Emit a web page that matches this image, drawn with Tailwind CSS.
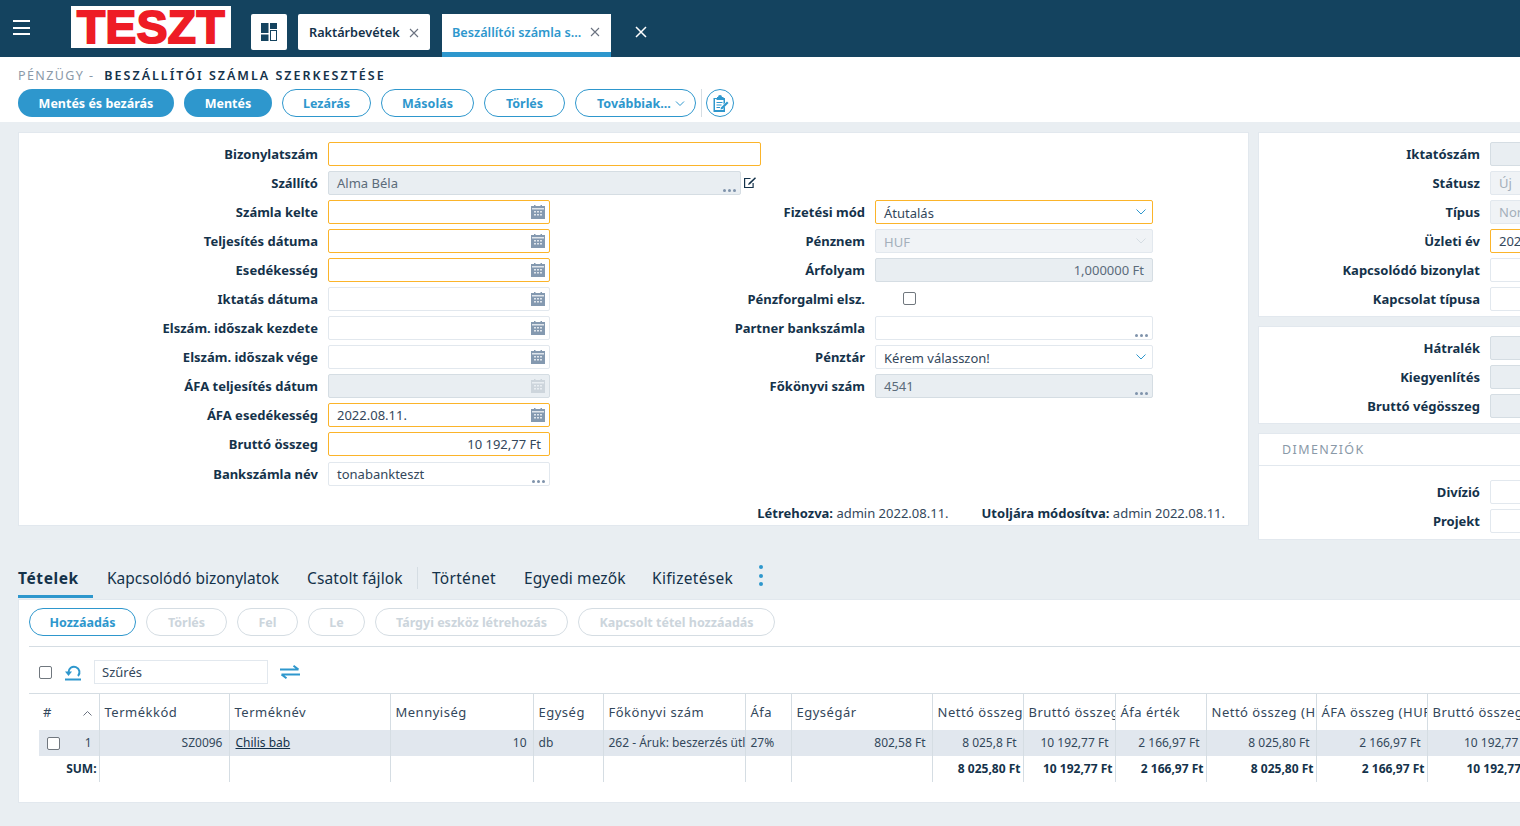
<!DOCTYPE html>
<html lang="hu">
<head>
<meta charset="utf-8" />
<title>Beszállítói számla szerkesztése</title>
<script src="https://cdn.jsdelivr.net/npm/@tailwindcss/browser@4"></script>
</head>
<body class="h-[826px] w-[1520px] overflow-hidden bg-[#e9eef2] font-['Noto_Sans',sans-serif] text-[13px] text-[#14324a]">

<!-- Top bar -->
<header class="flex h-[57px] items-start bg-[#14435f]">
  <button class="ml-[13px] mt-[20px] flex h-[15px] w-[17px] flex-col justify-between">
    <span class="h-[2px] w-full bg-white"></span><span class="h-[2px] w-full bg-white"></span><span class="h-[2px] w-full bg-white"></span>
  </button>
  <div class="ml-[41px] mt-[6px] flex h-[42px] w-[160px] items-center justify-center bg-white font-['Liberation_Sans',sans-serif] text-[46px] leading-none font-bold tracking-[0.5px] text-[#ee1c25] [-webkit-text-stroke:2px_#ee1c25]">TESZT</div>
  <button class="ml-[20px] mt-[14px] flex h-[36px] w-[36px] items-center justify-center rounded-[2px] bg-white">
    <svg width="18" height="18" viewBox="0 0 18 18"><rect x="1" y="0" width="7.5" height="10" fill="#14435f"/><rect x="10" y="0" width="7" height="6" fill="#14435f"/><rect x="1" y="11.500" width="7.5" height="6.500" fill="#14435f"/><rect x="10.500" y="7.500" width="6" height="10" fill="none" stroke="#14435f"/></svg>
  </button>
  <div class="ml-[11px] mt-[14px] flex h-[36px] w-[132px] items-center justify-between rounded-[2px] bg-white pl-[11px] pr-[11px] pt-[1px] text-[12.7px] font-semibold text-[#14324a]">
    <span>Raktárbevétek</span>
    <svg width="10" height="10" viewBox="0 0 10 10" stroke="#6b7280" stroke-width="1.100"><path d="M1 1l8 8M9 1l-8 8"/></svg>
  </div>
  <div class="ml-[12px] mt-[14px] flex h-[43px] w-[169px] items-start justify-between border-b-[5px] border-[#2e97cd] bg-white pl-[10px] pr-[11px] pt-[9px] text-[12.7px] font-semibold text-[#2e97cd]">
    <span>Beszállítói számla s...</span>
    <svg class="mt-[4px]" width="10" height="10" viewBox="0 0 10 10" stroke="#6b7280" stroke-width="1.100"><path d="M1 1l8 8M9 1l-8 8"/></svg>
  </div>
  <svg class="ml-[24px] mt-[26px]" width="12" height="12" viewBox="0 0 12 12" stroke="#fff" stroke-width="1.500"><path d="M1 1l10 10M11 1L1 11"/></svg>
</header>

<!-- Title and actions -->
<section class="h-[65px] bg-white pl-[18px]">
  <div class="flex h-[32px] items-end pb-[7px] text-[12.5px] leading-none tracking-[1.4px]">
    <span class="text-[#8a99a8]">PÉNZÜGY -</span>
    <span class="ml-[10px] font-semibold tracking-[2px] text-[#14324a]">BESZÁLLÍTÓI SZÁMLA SZERKESZTÉSE</span>
  </div>
  <div class="flex items-center gap-[10px] text-[12.5px] font-bold [&_button]:pt-[2px]">
    <button class="flex h-[28px] w-[156px] items-center justify-center rounded-full bg-[#2e97cd] text-white">Mentés és bezárás</button>
    <button class="flex h-[28px] w-[88px] items-center justify-center rounded-full bg-[#2e97cd] text-white">Mentés</button>
    <button class="flex h-[28px] w-[89px] items-center justify-center rounded-full border border-[#2e97cd] bg-white text-[#2e97cd]">Lezárás</button>
    <button class="flex h-[28px] w-[93px] items-center justify-center rounded-full border border-[#2e97cd] bg-white text-[#2e97cd]">Másolás</button>
    <button class="flex h-[28px] w-[81px] items-center justify-center rounded-full border border-[#2e97cd] bg-white text-[#2e97cd]">Törlés</button>
    <button class="flex h-[28px] w-[121px] items-center justify-between rounded-full border border-[#2e97cd] bg-white pl-[21px] pr-[10px] text-[#2e97cd]">
      <span>Továbbiak...</span>
      <svg width="10" height="6" viewBox="0 0 10 6" fill="none" stroke="#2e97cd"><path d="M1 .5l4 4 4-4"/></svg>
    </button>
    <div class="-ml-[5px] flex items-center gap-[4px]">
      <span class="h-[28px] w-px bg-[#d5dde3]"></span>
      <button class="flex h-[28px] w-[28px] items-center justify-center rounded-full border border-[#2e97cd] !pt-0">
        <svg width="17" height="17" viewBox="0 0 17 17"><path fill="#2e97cd" d="M5 2h1a2 2 0 0 1 4 0h1.500v1H13v5l-1.500 1.500V4H11.500v1h-7V4H3v11h8.500v-2L13 11.500V17H1.500V3H5z"/><path fill="#2e97cd" d="M4.500 7h6v1h-6zM4.500 9.500h5v1h-5zM4.500 12h3.500v1H4.500z"/><path fill="#2e97cd" d="M15 6.500l1.500 1.500-6 6-2 .5.500-2z"/></svg>
      </button>
    </div>
  </div>
</section>

<main class="flex items-start gap-[9px] overflow-hidden pl-[18px] pt-[10px] [&_label]:pt-[2px]">
  <!-- Main form card -->
  <div class="h-[394px] w-[1231px] shrink-0 border border-[#e2e8ee] bg-white pt-[9px]">
    <div class="flex flex-col gap-[5px]">
      <div class="flex h-[24px] items-center">
        <label class="w-[309px] pr-[10px] text-right font-bold">Bizonylatszám</label>
        <div class="h-[24px] w-[433px] rounded-[2px] border border-[#fbb42a]"></div>
      </div>
      <div class="flex h-[24px] items-center">
        <label class="w-[309px] pr-[10px] text-right font-bold">Szállító</label>
        <div class="relative flex h-[24px] w-[413px] items-center rounded-[2px] border border-[#d5dde3] bg-[#e9eef2] pl-[8px] pt-[2px] text-[#5b6b7a]">Alma Béla
          <span class="absolute right-[4px] bottom-[2px] flex gap-[2px]"><i class="h-[3px] w-[3px] rounded-full bg-[#7f93ab]"></i><i class="h-[3px] w-[3px] rounded-full bg-[#7f93ab]"></i><i class="h-[3px] w-[3px] rounded-full bg-[#7f93ab]"></i></span>
        </div>
        <svg class="mb-[2px] ml-[3px]" width="12" height="11" viewBox="0 0 12 11" fill="none" stroke="#14324a" stroke-width="1.200"><path d="M6.500 1.500H.6v9h8.500V6"/><path d="M11 .2l1 1-6 6-2 .8.800-2z" fill="#14324a" stroke="none"/></svg>
      </div>
    </div>

    <div class="mt-[5px] flex">
      <!-- Left fields -->
      <div class="flex w-[541px] flex-col gap-[5px]">
        <div class="flex h-[24px] items-center">
          <label class="w-[309px] pr-[10px] text-right font-bold">Számla kelte</label>
          <div class="flex h-[24px] w-[222px] items-center justify-end rounded-[2px] border border-[#fbb42a] pr-[4px]"><svg width="14" height="14" viewBox="0 0 14 14"><path fill="#8499b0" d="M3 1V0h1.500v1h5V0H11v1h3v13H0V1z"/><path fill="#dfe5eb" d="M1 3h12v1.500H1zM3 6h2v1.500H3zM6 6h2v1.500H6zM9 6h2v1.500H9zM3 9h2v1.500H3zM6 9h2v1.500H6zM9 9h2v1.500H9z"/></svg></div>
        </div>
        <div class="flex h-[24px] items-center">
          <label class="w-[309px] pr-[10px] text-right font-bold">Teljesítés dátuma</label>
          <div class="flex h-[24px] w-[222px] items-center justify-end rounded-[2px] border border-[#fbb42a] pr-[4px]"><svg width="14" height="14" viewBox="0 0 14 14"><path fill="#8499b0" d="M3 1V0h1.500v1h5V0H11v1h3v13H0V1z"/><path fill="#dfe5eb" d="M1 3h12v1.500H1zM3 6h2v1.500H3zM6 6h2v1.500H6zM9 6h2v1.500H9zM3 9h2v1.500H3zM6 9h2v1.500H6zM9 9h2v1.500H9z"/></svg></div>
        </div>
        <div class="flex h-[24px] items-center">
          <label class="w-[309px] pr-[10px] text-right font-bold">Esedékesség</label>
          <div class="flex h-[24px] w-[222px] items-center justify-end rounded-[2px] border border-[#fbb42a] pr-[4px]"><svg width="14" height="14" viewBox="0 0 14 14"><path fill="#8499b0" d="M3 1V0h1.500v1h5V0H11v1h3v13H0V1z"/><path fill="#dfe5eb" d="M1 3h12v1.500H1zM3 6h2v1.500H3zM6 6h2v1.500H6zM9 6h2v1.500H9zM3 9h2v1.500H3zM6 9h2v1.500H6zM9 9h2v1.500H9z"/></svg></div>
        </div>
        <div class="flex h-[24px] items-center">
          <label class="w-[309px] pr-[10px] text-right font-bold">Iktatás dátuma</label>
          <div class="flex h-[24px] w-[222px] items-center justify-end rounded-[2px] border border-[#e2e8ee] pr-[4px]"><svg width="14" height="14" viewBox="0 0 14 14"><path fill="#8499b0" d="M3 1V0h1.500v1h5V0H11v1h3v13H0V1z"/><path fill="#dfe5eb" d="M1 3h12v1.500H1zM3 6h2v1.500H3zM6 6h2v1.500H6zM9 6h2v1.500H9zM3 9h2v1.500H3zM6 9h2v1.500H6zM9 9h2v1.500H9z"/></svg></div>
        </div>
        <div class="flex h-[24px] items-center">
          <label class="w-[309px] pr-[10px] text-right font-bold">Elszám. időszak kezdete</label>
          <div class="flex h-[24px] w-[222px] items-center justify-end rounded-[2px] border border-[#e2e8ee] pr-[4px]"><svg width="14" height="14" viewBox="0 0 14 14"><path fill="#8499b0" d="M3 1V0h1.500v1h5V0H11v1h3v13H0V1z"/><path fill="#dfe5eb" d="M1 3h12v1.500H1zM3 6h2v1.500H3zM6 6h2v1.500H6zM9 6h2v1.500H9zM3 9h2v1.500H3zM6 9h2v1.500H6zM9 9h2v1.500H9z"/></svg></div>
        </div>
        <div class="flex h-[24px] items-center">
          <label class="w-[309px] pr-[10px] text-right font-bold">Elszám. időszak vége</label>
          <div class="flex h-[24px] w-[222px] items-center justify-end rounded-[2px] border border-[#e2e8ee] pr-[4px]"><svg width="14" height="14" viewBox="0 0 14 14"><path fill="#8499b0" d="M3 1V0h1.500v1h5V0H11v1h3v13H0V1z"/><path fill="#dfe5eb" d="M1 3h12v1.500H1zM3 6h2v1.500H3zM6 6h2v1.500H6zM9 6h2v1.500H9zM3 9h2v1.500H3zM6 9h2v1.500H6zM9 9h2v1.500H9z"/></svg></div>
        </div>
        <div class="flex h-[24px] items-center">
          <label class="w-[309px] pr-[10px] text-right font-bold">ÁFA teljesítés dátum</label>
          <div class="flex h-[24px] w-[222px] items-center justify-end rounded-[2px] border border-[#d5dde3] bg-[#e9eef2] pr-[4px]"><svg width="14" height="14" viewBox="0 0 14 14"><path fill="#cdd5dc" d="M3 1V0h1.500v1h5V0H11v1h3v13H0V1z"/><path fill="#e9eef2" d="M1 3h12v1.500H1zM3 6h2v1.500H3zM6 6h2v1.500H6zM9 6h2v1.500H9zM3 9h2v1.500H3zM6 9h2v1.500H6zM9 9h2v1.500H9z"/></svg></div>
        </div>
        <div class="flex h-[24px] items-center">
          <label class="w-[309px] pr-[10px] text-right font-bold">ÁFA esedékesség</label>
          <div class="flex h-[24px] w-[222px] items-center justify-between rounded-[2px] border border-[#fbb42a] pl-[8px] pr-[4px] text-[#33475b]"><span class="pt-[2px]">2022.08.11.</span><svg width="14" height="14" viewBox="0 0 14 14"><path fill="#8499b0" d="M3 1V0h1.500v1h5V0H11v1h3v13H0V1z"/><path fill="#dfe5eb" d="M1 3h12v1.500H1zM3 6h2v1.500H3zM6 6h2v1.500H6zM9 6h2v1.500H9zM3 9h2v1.500H3zM6 9h2v1.500H6zM9 9h2v1.500H9z"/></svg></div>
        </div>
        <div class="flex h-[24px] items-center">
          <label class="w-[309px] pr-[10px] text-right font-bold">Bruttó összeg</label>
          <div class="flex h-[24px] w-[222px] items-center justify-end rounded-[2px] border border-[#fbb42a] pr-[8px] pt-[2px] text-[#33475b]">10 192,77 Ft</div>
        </div>
        <div class="mt-[1px] flex h-[24px] items-center">
          <label class="w-[309px] pr-[10px] text-right font-bold">Bankszámla név</label>
          <div class="relative flex h-[24px] w-[222px] items-center rounded-[2px] border border-[#e2e8ee] pl-[8px] pt-[2px] text-[#33475b]">tonabankteszt
            <span class="absolute right-[4px] bottom-[2px] flex gap-[2px]"><i class="h-[3px] w-[3px] rounded-full bg-[#7f93ab]"></i><i class="h-[3px] w-[3px] rounded-full bg-[#7f93ab]"></i><i class="h-[3px] w-[3px] rounded-full bg-[#7f93ab]"></i></span>
          </div>
        </div>
      </div>

      <!-- Right fields -->
      <div class="flex flex-col gap-[5px]">
        <div class="flex h-[24px] items-center">
          <label class="w-[315px] pr-[10px] text-right font-bold">Fizetési mód</label>
          <div class="flex h-[24px] w-[278px] items-center justify-between rounded-[2px] border border-[#fbb42a] pl-[8px] pr-[6px] text-[#33475b]"><span class="pt-[4px]">Átutalás</span><svg width="10" height="6" viewBox="0 0 10 6" fill="none" stroke="#2e97cd"><path d="M.5.500l4.500 4.500 4.500-4.500"/></svg></div>
        </div>
        <div class="flex h-[24px] items-center">
          <label class="w-[315px] pr-[10px] text-right font-bold">Pénznem</label>
          <div class="flex h-[24px] w-[278px] items-center justify-between rounded-[2px] border border-[#e2e8ee] bg-[#f0f3f6] pl-[8px] pr-[6px] text-[#a3afba]"><span class="pt-[4px]">HUF</span><svg width="10" height="6" viewBox="0 0 10 6" fill="none" stroke="#d5dde3"><path d="M.5.500l4.500 4.500 4.500-4.500"/></svg></div>
        </div>
        <div class="flex h-[24px] items-center">
          <label class="w-[315px] pr-[10px] text-right font-bold">Árfolyam</label>
          <div class="flex h-[24px] w-[278px] items-center justify-end rounded-[2px] border border-[#d5dde3] bg-[#e9eef2] pr-[8px] pt-[2px] text-[#5b6b7a]">1,000000 Ft</div>
        </div>
        <div class="flex h-[24px] items-center">
          <label class="w-[315px] pr-[10px] text-right font-bold">Pénzforgalmi elsz.</label>
          <div class="mb-[2px] ml-[28px] h-[13px] w-[13px] rounded-[2px] border border-[#70777e]"></div>
        </div>
        <div class="flex h-[24px] items-center">
          <label class="w-[315px] pr-[10px] text-right font-bold">Partner bankszámla</label>
          <div class="relative h-[24px] w-[278px] rounded-[2px] border border-[#e2e8ee]">
            <span class="absolute right-[4px] bottom-[2px] flex gap-[2px]"><i class="h-[3px] w-[3px] rounded-full bg-[#7f93ab]"></i><i class="h-[3px] w-[3px] rounded-full bg-[#7f93ab]"></i><i class="h-[3px] w-[3px] rounded-full bg-[#7f93ab]"></i></span>
          </div>
        </div>
        <div class="flex h-[24px] items-center">
          <label class="w-[315px] pr-[10px] text-right font-bold">Pénztár</label>
          <div class="flex h-[24px] w-[278px] items-center justify-between rounded-[2px] border border-[#e2e8ee] pl-[8px] pr-[6px] text-[#33475b]"><span class="pt-[4px]">Kérem válasszon!</span><svg width="10" height="6" viewBox="0 0 10 6" fill="none" stroke="#2e97cd"><path d="M.5.500l4.500 4.500 4.500-4.500"/></svg></div>
        </div>
        <div class="flex h-[24px] items-center">
          <label class="w-[315px] pr-[10px] text-right font-bold">Főkönyvi szám</label>
          <div class="relative flex h-[24px] w-[278px] items-center rounded-[2px] border border-[#d5dde3] bg-[#e9eef2] pl-[8px] pt-[2px] text-[#5b6b7a]">4541
            <span class="absolute right-[4px] bottom-[2px] flex gap-[2px]"><i class="h-[3px] w-[3px] rounded-full bg-[#7f93ab]"></i><i class="h-[3px] w-[3px] rounded-full bg-[#7f93ab]"></i><i class="h-[3px] w-[3px] rounded-full bg-[#7f93ab]"></i></span>
          </div>
        </div>
      </div>
    </div>

    <div class="mt-[18px] flex justify-end gap-[33px] pr-[23px] text-[#33475b]">
      <p><b class="font-bold text-[#14324a]">Létrehozva:</b> admin 2022.08.11.</p>
      <p><b class="font-bold text-[#14324a]">Utoljára módosítva:</b> admin 2022.08.11.</p>
    </div>
  </div>

  <!-- Side cards -->
  <div class="flex w-[300px] shrink-0 flex-col gap-[9px]">
    <div class="flex h-[185px] flex-col gap-[5px] border border-[#e2e8ee] bg-white pt-[9px]">
      <div class="flex h-[24px] items-center"><label class="w-[221px] text-right font-bold">Iktatószám</label><div class="ml-[10px] h-[24px] w-[60px] rounded-[2px] border border-[#d5dde3] bg-[#e9eef2]"></div></div>
      <div class="flex h-[24px] items-center"><label class="w-[221px] text-right font-bold">Státusz</label><div class="ml-[10px] flex h-[24px] w-[60px] items-center rounded-[2px] border border-[#e2e8ee] bg-[#f0f3f6] pl-[8px] pt-[2px] text-[#a3afba]">Új</div></div>
      <div class="flex h-[24px] items-center"><label class="w-[221px] text-right font-bold">Típus</label><div class="ml-[10px] flex h-[24px] w-[60px] items-center rounded-[2px] border border-[#e2e8ee] bg-[#f0f3f6] pl-[8px] pt-[2px] text-[#a3afba]">Normál</div></div>
      <div class="flex h-[24px] items-center"><label class="w-[221px] text-right font-bold">Üzleti év</label><div class="ml-[10px] flex h-[24px] w-[60px] items-center rounded-[2px] border border-[#fbb42a] pl-[8px] pt-[2px] text-[#33475b]">2022</div></div>
      <div class="flex h-[24px] items-center"><label class="w-[221px] text-right font-bold">Kapcsolódó bizonylat</label><div class="ml-[10px] h-[24px] w-[60px] rounded-[2px] border border-[#e2e8ee]"></div></div>
      <div class="flex h-[24px] items-center"><label class="w-[221px] text-right font-bold">Kapcsolat típusa</label><div class="ml-[10px] h-[24px] w-[60px] rounded-[2px] border border-[#e2e8ee]"></div></div>
    </div>
    <div class="flex h-[98px] flex-col gap-[5px] border border-[#e2e8ee] bg-white pt-[9px]">
      <div class="flex h-[24px] items-center"><label class="w-[221px] text-right font-bold">Hátralék</label><div class="ml-[10px] h-[24px] w-[60px] rounded-[2px] border border-[#d5dde3] bg-[#e9eef2]"></div></div>
      <div class="flex h-[24px] items-center"><label class="w-[221px] text-right font-bold">Kiegyenlítés</label><div class="ml-[10px] h-[24px] w-[60px] rounded-[2px] border border-[#d5dde3] bg-[#e9eef2]"></div></div>
      <div class="flex h-[24px] items-center"><label class="w-[221px] text-right font-bold">Bruttó végösszeg</label><div class="ml-[10px] h-[24px] w-[60px] rounded-[2px] border border-[#d5dde3] bg-[#e9eef2]"></div></div>
    </div>
    <div class="h-[107px] border border-[#e2e8ee] bg-white">
      <div class="flex h-[32px] items-center border-b border-[#e2e8ee] pl-[23px] pt-[2px] text-[12.5px] tracking-[1.400px] text-[#8a99a8]">DIMENZIÓK</div>
      <div class="flex flex-col gap-[5px] pt-[14px]">
        <div class="flex h-[24px] items-center"><label class="w-[221px] text-right font-bold">Divízió</label><div class="ml-[10px] h-[24px] w-[60px] rounded-[2px] border border-[#e2e8ee]"></div></div>
        <div class="flex h-[24px] items-center"><label class="w-[221px] text-right font-bold">Projekt</label><div class="ml-[10px] h-[24px] w-[60px] rounded-[2px] border border-[#e2e8ee]"></div></div>
      </div>
    </div>
  </div>
</main>

<!-- Tabs -->
<nav class="flex h-[58px] items-end pl-[18px] text-[15.5px] leading-none whitespace-nowrap text-[#14324a]">
  <a class="flex h-[28px] w-[75px] border-b-[3px] border-[#2e97cd] pt-[1px] font-bold tracking-[0.6px]">Tételek</a>
  <a class="ml-[14px] flex h-[28px] pt-[1px]">Kapcsolódó bizonylatok</a>
  <a class="ml-[28px] flex h-[28px] w-[96px] pt-[1px] tracking-[0.1px]">Csatolt fájlok</a>
  <span class="mb-[9px] ml-[14px] h-[22px] w-px bg-[#d5dde3]"></span>
  <a class="ml-[14px] flex h-[28px] w-[64px] pt-[1px] tracking-[0.3px]">Történet</a>
  <a class="ml-[28px] flex h-[28px] w-[100px] pt-[1px] tracking-[0.1px]">Egyedi mezők</a>
  <a class="ml-[28px] flex h-[28px] w-[80px] pt-[1px] tracking-[0.3px]">Kifizetések</a>
  <span class="mb-[12px] ml-[27px] flex h-[21px] flex-col justify-between"><i class="h-[4px] w-[4px] rounded-full bg-[#2e97cd]"></i><i class="h-[4px] w-[4px] rounded-full bg-[#2e97cd]"></i><i class="h-[4px] w-[4px] rounded-full bg-[#2e97cd]"></i></span>
</nav>

<!-- Items card -->
<section class="ml-[18px] mt-[1px] h-[204px] overflow-hidden border-t border-b border-l border-[#e2e8ee] bg-white pl-[10px]">
  <div class="flex h-[47px] items-start gap-[10px] border-b border-[#d5dde3] pt-[8px] text-[12.5px] font-bold [&_button]:pt-[2px]">
    <button class="flex h-[28px] w-[107px] items-center justify-center rounded-full border border-[#2e97cd] text-[#2e97cd]">Hozzáadás</button>
    <button class="flex h-[28px] w-[81px] items-center justify-center rounded-full border border-[#d5dde3] text-[#ccd5dc]">Törlés</button>
    <button class="flex h-[28px] w-[61px] items-center justify-center rounded-full border border-[#d5dde3] text-[#ccd5dc]">Fel</button>
    <button class="flex h-[28px] w-[57px] items-center justify-center rounded-full border border-[#d5dde3] text-[#ccd5dc]">Le</button>
    <button class="flex h-[28px] w-[193px] items-center justify-center rounded-full border border-[#d5dde3] text-[#ccd5dc]">Tárgyi eszköz létrehozás</button>
    <button class="flex h-[28px] w-[197px] items-center justify-center rounded-full border border-[#d5dde3] text-[#ccd5dc]">Kapcsolt tétel hozzáadás</button>
  </div>
  <div class="flex h-[47px] items-center border-b border-[#d5dde3] pl-[10px] pt-[4px]">
    <div class="h-[13px] w-[13px] rounded-[2px] border border-[#70777e]"></div>
    <svg class="ml-[12px]" width="18" height="18" viewBox="0 0 18 18" fill="none"><path stroke="#2e97cd" stroke-width="2" d="M4.500 9.500A5.500 5.500 0 1 1 14 13"/><path fill="#2e97cd" d="M1 8.500h7l-3.500 4.500z"/><path fill="#2e97cd" d="M1 15.500h16v2H1z"/></svg>
    <div class="ml-[12px] flex h-[24px] w-[174px] items-center border border-[#e2e8ee] pl-[7px] pt-[1px] text-[#33475b]">Szűrés</div>
    <svg class="ml-[12px]" width="20" height="14" viewBox="0 0 20 14" fill="none" stroke="#2e97cd" stroke-width="2"><path d="M0 4.500h18.500M13.500 .8l5 3.700M20 9.500H1.500M6.500 13.200l-5-3.700"/></svg>
  </div>

  <table class="w-[1509px] table-fixed border-collapse text-[12px] text-[#33475b] [&_td]:h-[26px] [&_td]:border-l [&_td]:border-[#d5dde3] [&_th]:h-[36px] [&_th]:border-l [&_th]:border-[#d5dde3] [&_th]:pt-[2px]">
    <colgroup>
      <col class="w-[10px]" /><col class="w-[60px]" /><col class="w-[130px]" /><col class="w-[161px]" /><col class="w-[143px]" /><col class="w-[70px]" /><col class="w-[142px]" /><col class="w-[46px]" /><col class="w-[141px]" /><col class="w-[91px]" /><col class="w-[92px]" /><col class="w-[91px]" /><col class="w-[110px]" /><col class="w-[111px]" /><col class="w-[111px]" />
    </colgroup>
    <thead class="text-[13px] tracking-[0.5px]">
      <tr>
        <th class="!border-l-0"></th>
        <th class="!border-l-0 pl-[4px] text-left font-normal"><div class="flex items-center justify-between pr-[7px]">#<svg width="9" height="5" viewBox="0 0 9 5" fill="none" stroke="#6b7280"><path d="M.5 4.500l4-4 4 4"/></svg></div></th>
        <th class="overflow-hidden pl-[5px] text-left font-normal whitespace-nowrap">Termékkód</th>
        <th class="overflow-hidden pl-[5px] text-left font-normal whitespace-nowrap">Terméknév</th>
        <th class="overflow-hidden pl-[5px] text-left font-normal whitespace-nowrap">Mennyiség</th>
        <th class="overflow-hidden pl-[5px] text-left font-normal whitespace-nowrap">Egység</th>
        <th class="overflow-hidden pl-[5px] text-left font-normal whitespace-nowrap">Főkönyvi szám</th>
        <th class="overflow-hidden pl-[5px] text-left font-normal whitespace-nowrap">Áfa</th>
        <th class="overflow-hidden pl-[5px] text-left font-normal whitespace-nowrap">Egységár</th>
        <th class="overflow-hidden pl-[5px] text-left font-normal whitespace-nowrap">Nettó összeg</th>
        <th class="overflow-hidden pl-[5px] text-left font-normal whitespace-nowrap">Bruttó összeg</th>
        <th class="overflow-hidden pl-[5px] text-left font-normal whitespace-nowrap">Áfa érték</th>
        <th class="overflow-hidden pl-[5px] text-left font-normal whitespace-nowrap">Nettó összeg (HUF)</th>
        <th class="overflow-hidden pl-[5px] text-left font-normal whitespace-nowrap">ÁFA összeg (HUF)</th>
        <th class="overflow-hidden pl-[5px] text-left font-normal whitespace-nowrap">Bruttó összeg (HUF)</th>
      </tr>
    </thead>
    <tbody>
      <tr>
        <td class="!border-l-0"></td>
        <td class="!border-l-0 bg-[#e1e7ee]"><div class="flex items-center justify-between pl-[8px] pr-[7px]"><span class="h-[13px] w-[13px] rounded-[2px] border border-[#70777e] bg-white"></span>1</div></td>
        <td class="bg-[#e1e7ee] pr-[6px] text-right">SZ0096</td>
        <td class="bg-[#e1e7ee] pl-[6px] text-[#14324a] underline">Chilis bab</td>
        <td class="bg-[#e1e7ee] pr-[6px] text-right">10</td>
        <td class="bg-[#e1e7ee] pl-[5px]">db</td>
        <td class="overflow-hidden bg-[#e1e7ee] pl-[5px] whitespace-nowrap">262 - Áruk: beszerzés ütlemében</td>
        <td class="bg-[#e1e7ee] pl-[5px]">27%</td>
        <td class="bg-[#e1e7ee] pr-[6px] text-right">802,58 Ft</td>
        <td class="bg-[#e1e7ee] pr-[6px] text-right">8 025,8 Ft</td>
        <td class="bg-[#e1e7ee] pr-[6px] text-right">10 192,77 Ft</td>
        <td class="bg-[#e1e7ee] pr-[6px] text-right">2 166,97 Ft</td>
        <td class="bg-[#e1e7ee] pr-[6px] text-right">8 025,80 Ft</td>
        <td class="bg-[#e1e7ee] pr-[6px] text-right">2 166,97 Ft</td>
        <td class="bg-[#e1e7ee] pr-[6px] text-right whitespace-nowrap">10 192,77 Ft</td>
      </tr>
      <tr class="font-bold text-[#14324a]">
        <td class="!border-l-0"></td>
        <td class="!border-l-0 pr-[2px] text-right">SUM:</td>
        <td></td><td></td><td></td><td></td><td></td><td></td><td></td>
        <td class="pr-[2px] text-right whitespace-nowrap">8 025,80 Ft</td>
        <td class="pr-[2px] text-right whitespace-nowrap">10 192,77 Ft</td>
        <td class="pr-[2px] text-right whitespace-nowrap">2 166,97 Ft</td>
        <td class="pr-[2px] text-right whitespace-nowrap">8 025,80 Ft</td>
        <td class="pr-[2px] text-right whitespace-nowrap">2 166,97 Ft</td>
        <td class="pr-[2px] text-right whitespace-nowrap">10 192,77 Ft</td>
      </tr>
    </tbody>
  </table>
</section>
</body>
</html>
